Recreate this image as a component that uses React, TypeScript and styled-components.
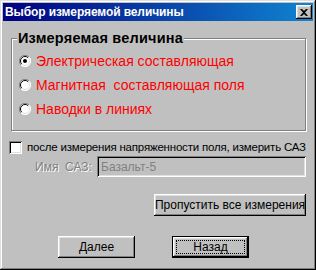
import styled, { createGlobalStyle } from "styled-components";

const GlobalStyle = createGlobalStyle`
  html, body {
    margin: 0;
    padding: 0;
    background: #c0c0c0;
  }
  body {
    font-family: "Liberation Sans", Arial, sans-serif;
  }
`;

//# окно диалога
const Window = styled.div`
  box-sizing: border-box;
  width: 316px;
  height: 270px;
  padding: 3px;
  background: #c0c0c0;
  box-shadow: inset -1px -1px #000, inset 1px 1px #dfdfdf,
    inset -2px -2px #808080, inset 2px 2px #fff;
  display: flex;
  flex-direction: column;
`;

const TitleBar = styled.div`
  height: 18px;
  display: flex;
  align-items: center;
  justify-content: space-between;
  padding: 0 1px 0 2px;
  background: linear-gradient(to right, #000080, #1084d0);
`;

const TitleText = styled.span`
  color: #fff;
  font-weight: bold;
  font-size: 12px;
  letter-spacing: -0.1px;
`;

const CloseButton = styled.div`
  width: 16px;
  height: 14px;
  display: flex;
  align-items: center;
  justify-content: center;
  background: #c0c0c0;
  box-shadow: inset -1px -1px #000, inset 1px 1px #fff,
    inset -2px -2px #808080, inset 2px 2px #dfdfdf;
`;

const Body = styled.div`
  flex: 1;
  display: flex;
  flex-direction: column;
`;

//# группа выбора
const Group = styled.fieldset`
  margin: 9px 7px 0 8px;
  padding: 3px 0 9px 0;
  border: 1px solid #808080;
  box-shadow: inset 1px 1px #fff, 1px 1px #fff;
`;

const Legend = styled.legend`
  padding: 0 1px;
  margin-left: 5px;
  background: #c0c0c0;
  font-size: 14.5px;
  font-weight: bold;
  line-height: 16px;
  color: #000;
  letter-spacing: 0.2px;
`;

const RadioRow = styled.div`
  height: 24px;
  display: flex;
  align-items: center;
  gap: 5px;
  padding-left: 7px;
`;

const RedLabel = styled.span`
  color: #ff0000;
  font-size: 14px;
  white-space: pre;
`;

const CheckRow = styled.div`
  display: flex;
  align-items: center;
  gap: 5px;
  margin: 9px 0 0 6px;
  height: 14px;
`;

const CheckBox = styled.div`
  box-sizing: border-box;
  flex-shrink: 0;
  width: 13px;
  height: 13px;
  background: #fff;
  box-shadow: inset 1px 1px #808080, inset -1px -1px #fff,
    inset 2px 2px #000, inset -2px -2px #dfdfdf;
`;

const Text = styled.span`
  font-size: 11.5px;
  letter-spacing: -0.2px;
  color: #000;
  white-space: nowrap;
`;

const NameRow = styled.div`
  display: flex;
  align-items: center;
  margin: 2px 7px 0 32px;
  height: 21px;
`;

const DisabledLabel = styled.span`
  width: 62px;
  font-size: 12px;
  color: #808080;
  text-shadow: 1px 1px #fff;
  white-space: pre;
`;

const TextField = styled.div`
  box-sizing: border-box;
  flex: 1;
  height: 21px;
  display: flex;
  align-items: center;
  padding-left: 4px;
  background: #c0c0c0;
  font-size: 12px;
  color: #808080;
  box-shadow: inset 1px 1px #808080, inset -1px -1px #fff,
    inset 2px 2px #000, inset -2px -2px #dfdfdf;
`;

const SkipRow = styled.div`
  display: flex;
  justify-content: flex-end;
  margin: 17px 7px 0 0;
`;

const Button = styled.div<{ $w: number; $focused?: boolean }>`
  box-sizing: border-box;
  width: ${({ $w }) => $w}px;
  height: 22px;
  display: flex;
  align-items: center;
  justify-content: center;
  position: relative;
  background: #c0c0c0;
  font-size: 12px;
  color: #000;
  border: ${({ $focused }) => ($focused ? "1px solid #000" : "none")};
  box-shadow: inset -1px -1px #000, inset 1px 1px #fff,
    inset -2px -2px #808080, inset 2px 2px #dfdfdf;
`;

const FocusRing = styled.span`
  position: absolute;
  inset: 3px;
  border: 1px dotted #000;
`;

const ButtonRow = styled.div`
  display: flex;
  margin: 20px 0 0 55px;
  gap: 37px;
`;

function Radio({ checked }: { checked?: boolean }) {
  return (
    <svg width="12" height="12" viewBox="0 0 12 12">
      <circle cx="6" cy="6" r="5.5" fill="#fff" />
      <path d="M10 2 A5.5 5.5 0 0 0 2 10" stroke="#808080" strokeWidth="1" fill="none" />
      <path d="M9.2 2.8 A4.5 4.5 0 0 0 2.8 9.2" stroke="#000" strokeWidth="1" fill="none" />
      <path d="M2 10 A5.5 5.5 0 0 0 10 2" stroke="#fff" strokeWidth="1" fill="none" />
      <path d="M2.8 9.2 A4.5 4.5 0 0 0 9.2 2.8" stroke="#dfdfdf" strokeWidth="1" fill="none" />
      {checked && <circle cx="6" cy="6" r="2" fill="#000" />}
    </svg>
  );
}

export default function App() {
  return (
    <>
      <GlobalStyle />
      <Window>
        <TitleBar>
          <TitleText>Выбор измеряемой величины</TitleText>
          <CloseButton>
            <svg width="8" height="7" viewBox="0 0 8 7">
              <path d="M0 0h2l2 2 2-2h2L5 3.5 8 7H6L4 5 2 7H0l3-3.5z" fill="#000" />
            </svg>
          </CloseButton>
        </TitleBar>
        <Body>
          <Group>
            <Legend>Измеряемая величина</Legend>
            <RadioRow>
              <Radio checked />
              <RedLabel>Электрическая составляющая</RedLabel>
            </RadioRow>
            <RadioRow>
              <Radio />
              <RedLabel>Магнитная  составляющая поля</RedLabel>
            </RadioRow>
            <RadioRow>
              <Radio />
              <RedLabel>Наводки в линиях</RedLabel>
            </RadioRow>
          </Group>
          <CheckRow>
            <CheckBox />
            <Text>после измерения напряженности поля, измерить САЗ</Text>
          </CheckRow>
          <NameRow>
            <DisabledLabel>Имя  САЗ:</DisabledLabel>
            <TextField>Базальт-5</TextField>
          </NameRow>
          <SkipRow>
            <Button $w={152}>Пропустить все измерения</Button>
          </SkipRow>
          <ButtonRow>
            <Button $w={77}>Далее</Button>
            <Button $w={77} $focused>
              <FocusRing />
              Назад
            </Button>
          </ButtonRow>
        </Body>
      </Window>
    </>
  );
}
